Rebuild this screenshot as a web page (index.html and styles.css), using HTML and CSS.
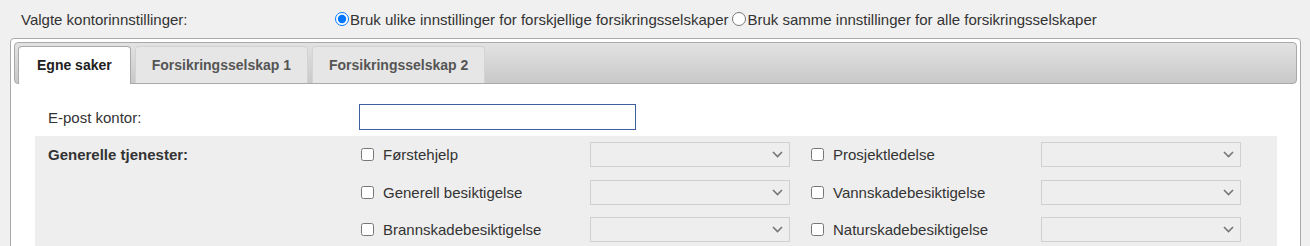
FILE: index.html
```html
<!DOCTYPE html>
<html>
<head>
  <title>Kontorinnstillinger</title>
  <meta charset="UTF-8">
  <link rel="stylesheet" href="styles.css">
</head>
<body>
  <div id="page">
    <div class="office-choice">
      <span class="choice-label">Valgte kontorinnstillinger:</span>
      <label class="radio"><input type="radio" name="mode" checked>Bruk ulike innstillinger for forskjellige forsikringsselskaper</label>
      <label class="radio"><input type="radio" name="mode">Bruk samme innstillinger for alle forsikringsselskaper</label>
    </div>

    <div class="tabs">
      <ul class="tab-bar">
        <li class="tab active">Egne saker</li>
        <li class="tab">Forsikringsselskap 1</li>
        <li class="tab">Forsikringsselskap 2</li>
      </ul>
      <div class="tab-panel">
        <div class="field-row">
          <label class="field-label" for="epost">E-post kontor:</label>
          <input id="epost" class="text-input" type="text">
        </div>

        <div class="services">
          <div class="services-label">Generelle tjenester:</div>

          <label class="check first"><input type="checkbox">Førstehjelp</label>
          <div class="select-box"><select disabled></select><svg width="11" height="7" viewBox="0 0 11 7"><polyline points="1,1 5.5,5.5 10,1" /></svg></div>
          <label class="check second"><input type="checkbox">Prosjektledelse</label>
          <div class="select-box"><select disabled></select><svg width="11" height="7" viewBox="0 0 11 7"><polyline points="1,1 5.5,5.5 10,1" /></svg></div>

          <label class="check first"><input type="checkbox">Generell besiktigelse</label>
          <div class="select-box"><select disabled></select><svg width="11" height="7" viewBox="0 0 11 7"><polyline points="1,1 5.5,5.5 10,1" /></svg></div>
          <label class="check second"><input type="checkbox">Vannskadebesiktigelse</label>
          <div class="select-box"><select disabled></select><svg width="11" height="7" viewBox="0 0 11 7"><polyline points="1,1 5.5,5.5 10,1" /></svg></div>

          <label class="check first"><input type="checkbox">Brannskadebesiktigelse</label>
          <div class="select-box"><select disabled></select><svg width="11" height="7" viewBox="0 0 11 7"><polyline points="1,1 5.5,5.5 10,1" /></svg></div>
          <label class="check second"><input type="checkbox">Naturskadebesiktigelse</label>
          <div class="select-box"><select disabled></select><svg width="11" height="7" viewBox="0 0 11 7"><polyline points="1,1 5.5,5.5 10,1" /></svg></div>
        </div>
      </div>
    </div>
  </div>
</body>
</html>
```

FILE: styles.css
```css
body {
  margin: 0;
  background-color: #f0f0f0;
  font-family: "Liberation Sans", Arial, sans-serif;
  font-size: 15px;
  color: #333333;
}

#page {
  padding: 0 9px 0 10px;
}

.office-choice {
  display: flex;
  align-items: center;
  height: 38px;
  padding-left: 11px;
}

.choice-label {
  width: 314px;
}

.radio {
  display: flex;
  align-items: center;
  margin-right: 4px;
}

.radio input {
  width: 14px;
  height: 14px;
  margin: 0 1px 0 0;
}

.tabs {
  border: 1px solid #aaaaaa;
  border-radius: 4px;
  background-color: #ffffff;
  padding: 3px;
  min-height: 260px;
}

.tab-bar {
  display: flex;
  gap: 4px;
  margin: 0;
  padding: 3px 3px 0 3px;
  list-style: none;
  border: 1px solid #aaaaaa;
  border-radius: 4px;
  background: linear-gradient(#e2e2e2, #c9c9c9);
}

.tab {
  height: 36px;
  line-height: 37px;
  padding: 0 16px;
  border: 1px solid #d3d3d3;
  border-bottom: none;
  border-radius: 4px 4px 0 0;
  background-color: #e6e6e6;
  color: #555555;
  font-size: 14px;
  font-weight: bold;
}

.tab.active {
  margin-bottom: -1px;
  padding: 0 18px 1px 18px;
  border-color: #aaaaaa;
  background-color: #ffffff;
  color: #212121;
}

.tab-panel {
  padding: 0 20px 0 21px;
}

.field-row {
  display: grid;
  grid-template-columns: 324px 277px;
  align-items: center;
  margin-top: 20px;
}

.field-label {
  padding-left: 13px;
}

.text-input {
  box-sizing: border-box;
  width: 277px;
  height: 26px;
  margin: 0;
  border: 1px solid #3d5f9f;
  background-color: #ffffff;
}

.services {
  display: grid;
  grid-template-columns: 324px 231px 200px 251px 200px;
  grid-auto-rows: 25px;
  row-gap: 12.5px;
  align-items: center;
  margin-top: 6px;
  padding: 6px 0 8px 0;
  background-color: #eeeeee;
}

.services-label {
  grid-row: span 3;
  align-self: start;
  padding-left: 13px;
  line-height: 25px;
  font-weight: bold;
}

.check {
  display: flex;
  align-items: center;
}

.check.first {
  padding-left: 2px;
}

.check.second {
  padding-left: 21px;
}

.check input {
  width: 13px;
  height: 13px;
  margin: 0 9px 0 0;
}

.select-box {
  display: flex;
  align-items: center;
  box-sizing: border-box;
  height: 25px;
  padding-right: 6px;
  border: 1px solid #d0d0d0;
}

.select-box select {
  flex: 1;
  height: 100%;
  border: none;
  background: transparent;
  appearance: none;
}

.select-box polyline {
  fill: none;
  stroke: #767676;
  stroke-width: 1.6;
}
```
